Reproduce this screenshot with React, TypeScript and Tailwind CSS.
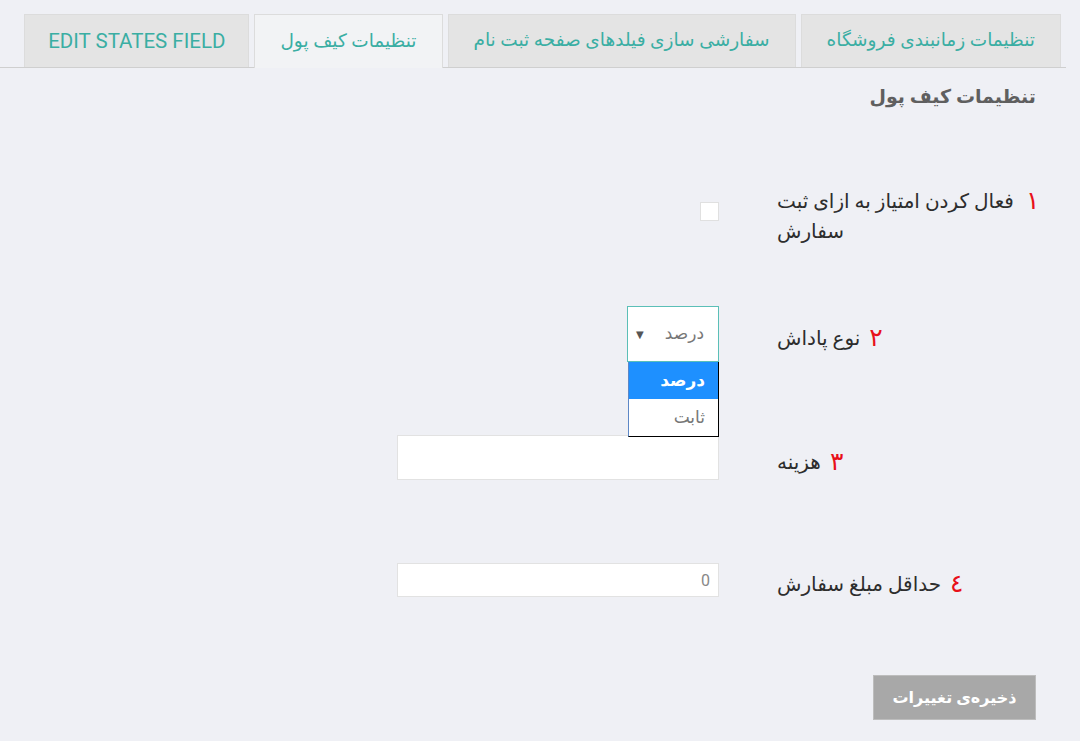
import { useState } from "react";

const tabs = [
  "تنظیمات زمانبندی فروشگاه",
  "سفارشی سازی فیلدهای صفحه ثبت نام",
  "تنظیمات کیف پول",
  "EDIT STATES FIELD",
];

const Label = ({ n, children }: { n: string; children: React.ReactNode }) => (
  <div className="flex w-[259px] justify-end">
    <div className="flex items-start gap-[9px] text-[20px] leading-[30px]">
      <span className="text-[25px] leading-[30px] text-[#e8101a]">{n}</span>
      <span className="max-w-[240px] text-left">{children}</span>
    </div>
  </div>
);

export default function App() {
  const [active, setActive] = useState(2);
  return (
    <div
      dir="rtl"
      className="min-h-[741px] w-full bg-[#eff0f5] text-[#2d2d2d]"
      style={{ fontFamily: 'Roboto, "DejaVu Sans", sans-serif' }}
    >
      {/* tabs */}
      <div className="pt-[14px] pr-[14px]">
        <div className="flex gap-[5px] border-b border-[#cfcfcf] pr-[5px]">
          {tabs.map((t, i) => (
            <button
              key={t}
              onClick={() => setActive(i)}
              className={
                (i === active
                  ? "-mb-px h-[54px] bg-[#f2f3f5] "
                  : "h-[53px] bg-[#e4e4e4] ") +
                (i === 3 ? "px-[23px] text-[20.5px] " : "px-[25px] text-[18.5px] ") +
                "border border-b-0 border-[#dcdcdc] font-normal text-[#3aaea3]"
              }
            >
              {t}
            </button>
          ))}
        </div>
      </div>

      <div className="pr-[40px]">
        <h2 className="mt-[14px] pr-[4px] text-[19px] font-bold leading-[30px] text-[#5f5f5f]">
          تنظیمات کیف پول
        </h2>

        {/* row 1 */}
        <div className="mt-[74px] flex">
          <div className="flex w-[263px] justify-end">
            <div className="flex items-start gap-[9px] text-[20px] leading-[30px]">
              <span className="text-[25px] leading-[30px] text-[#e8101a]">۱</span>
              <span className="max-w-[240px] text-left">فعال کردن امتیاز به ازای ثبت سفارش</span>
            </div>
          </div>
          <div className="mr-[58px] pt-[16px]">
            <div className="h-[19px] w-[19px] border border-[#e0e0e0] bg-white" />
          </div>
        </div>

        <div className="pr-[4px]">
          {/* row 2 */}
          <div className="mt-[60px] flex items-center">
            <div className="mt-[8px]">
              <Label n="۲">نوع پاداش</Label>
            </div>
            <div className="relative mr-[58px]">
              <div className="flex h-[56px] w-[92px] items-center justify-between border border-[#5bbfb7] bg-white px-[8px] text-[17px] text-[#777]">
                <span className="pr-[6px]">درصد</span>
                <span className="text-[10px] text-[#555]">▼</span>
              </div>
              <div className="absolute top-[56px] right-0 z-10 w-[91px] border-r border-b border-l border-r-black border-b-black border-l-[#5d87c6] bg-white text-[17px]">
                <div className="h-[37px] bg-[#1e90ff] pr-[13px] leading-[37px] font-bold text-white">
                  درصد
                </div>
                <div className="h-[37px] pr-[13px] leading-[37px] text-[#777]">ثابت</div>
              </div>
            </div>
          </div>

          {/* row 3 */}
          <div className="mt-[73px] flex items-center">
            <div className="mt-[8px]">
              <Label n="۳">هزینه</Label>
            </div>
            <input className="mr-[58px] h-[45px] w-[322px] border border-[#e2e2e2] bg-white outline-none" />
          </div>

          {/* row 4 */}
          <div className="mt-[83px] flex items-start">
            <div className="mt-[6px]">
              <Label n="٤">حداقل مبلغ سفارش</Label>
            </div>
            <input
              placeholder="0"
              className="mr-[58px] h-[34px] w-[322px] border border-[#e2e2e2] bg-white px-[8px] text-[16px] outline-none placeholder:text-[#888]"
            />
          </div>

          <button className="mt-[76px] h-[45px] w-[163px] bg-[#a8a8a8] text-[16px] font-bold text-white ring-1 ring-inset ring-[#bdbdbd]">
            ذخیره‌ی تغییرات
          </button>
        </div>
      </div>
    </div>
  );
}
